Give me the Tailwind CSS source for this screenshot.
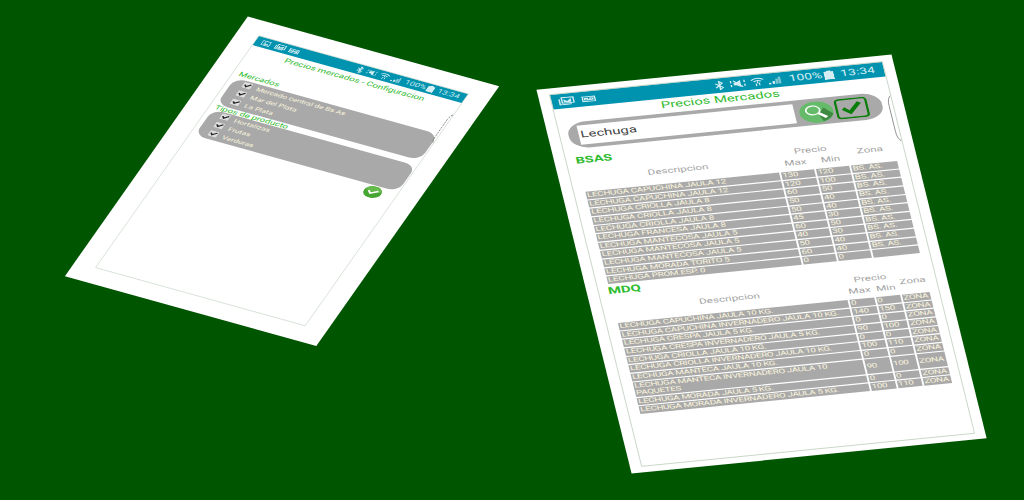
<!DOCTYPE html>
<html lang="es">
<head>
<meta charset="utf-8">
<title>Precios Mercados</title>
<script src="https://cdn.jsdelivr.net/npm/@tailwindcss/browser@4"></script>
</head>
<body class="w-[1024px] h-[500px] overflow-hidden bg-[#005500] relative font-[Roboto,'Liberation_Sans',sans-serif]">

<svg class="hidden">
  <symbol id="picture" viewBox="0 0 18 16"><path d="M1.500 1.500h15v13h-15z" fill="none" stroke="#d5eef3" stroke-width="1.700"/><path d="M4 12l3-5 3 3 2-2 3 4zM5 4h3v2H5z" fill="#d5eef3"/></symbol>
  <symbol id="gallery" viewBox="0 0 20 16"><path d="M4.500 1.500h14v10.500h-14zM1.500 4v10.500h14" fill="none" stroke="#d5eef3" stroke-width="1.800"/><path d="M6.500 10.500v-6l4 4 5-5v7z" fill="#d5eef3"/></symbol>
  <symbol id="voicemail" viewBox="0 0 18 12"><path d="M1.500 1.500h15v9h-15zM4 4.500h3.500v3H4zM10.500 4.500H14v3h-3.500zM7 7h4" fill="none" stroke="#d5eef3" stroke-width="1.700"/></symbol>
  <symbol id="bluetooth" viewBox="0 0 12 18"><path d="M1.500 5l8 8L6 16.500v-15L9.500 5l-8 8" fill="none" stroke="#d5eef3" stroke-width="1.700"/></symbol>
  <symbol id="mute" viewBox="0 0 20 18"><path d="M5 6.500h3l5-4v13l-5-4H5z" fill="#d5eef3"/><path d="M2 3v4M2 10v4M17.500 3v4M17.500 10v4M5 3l10 12" fill="none" stroke="#d5eef3" stroke-width="1.600"/></symbol>
  <symbol id="wifi" viewBox="0 0 18 18"><path d="M1.500 5.500Q9-1 16.500 5.500M4.500 8.500Q9 4.500 13.500 8.500" fill="none" stroke="#d5eef3" stroke-width="1.900"/><path d="M9 8v4M7 12v5M11 11v5" stroke="#d5eef3" stroke-width="1.500"/></symbol>
  <symbol id="signal" viewBox="0 0 18 16"><path d="M1 15v-3h3v3zM6 15V9h3v6z" fill="#d5eef3"/><path d="M10 15V5h3.500v10zM14 15V1h3v14z" fill="#7cc6d4"/></symbol>
  <symbol id="battery" viewBox="0 0 12 17"><path d="M3.500 0h5v2H12v15H0V2h3.500z" fill="#d5eef3"/></symbol>
</svg>

<!-- Configuration screen -->
<section class="absolute left-[259px] top-[36px] w-[360px] h-[640px] origin-top-left [transform:matrix(0.5806,0.1611,-0.2547,0.3617,0,0)]">
  <div class="absolute -left-[36px] -right-[37px] -top-[38px] -bottom-[40px] bg-white"></div>
  <div class="relative h-full flex flex-col outline-1 outline-[#bccdbc]">
    <header class="h-[25px] shrink-0 bg-[#0093b0] text-[#d5eef3] flex items-center pl-[10px] pr-[9px] text-[15px]">
      <svg class="w-[16px] h-[14px]"><use href="#picture"/></svg>
      <svg class="w-[19px] h-[15px] ml-[7px]"><use href="#gallery"/></svg>
      <svg class="w-[18px] h-[12px] ml-[5px]"><use href="#voicemail"/></svg>
      <svg class="w-[12px] h-[18px] ml-auto"><use href="#bluetooth"/></svg>
      <svg class="w-[20px] h-[17px] ml-[4px]"><use href="#mute"/></svg>
      <svg class="w-[18px] h-[18px] ml-[3px]"><use href="#wifi"/></svg>
      <svg class="w-[17px] h-[16px] ml-[2px]"><use href="#signal"/></svg>
      <span class="w-[36px] ml-[7px]">100%</span>
      <svg class="w-[12px] h-[17px] ml-[2px]"><use href="#battery"/></svg>
      <span class="w-[38px] ml-[6px]">13:34</span>
    </header>
    <h1 class="text-center text-[16px] leading-[20px] mt-[5px] pl-1 text-[#2fbb2f]">Precios mercados - Configuracion</h1>
    <h2 class="mt-[40px] pl-[10px] text-[15.5px] leading-[20px] h-[22px] text-[#2fbb2f]">Mercados</h2>
    <div class="ml-[8px] mr-[2px] h-[73px] rounded-[20px] bg-[#a9a9a9] pl-[18px] pt-[1px] text-[13.5px] leading-[23px] text-[#fbf5dd]" data-items="Mercado central de Bs As|Mar del Plata|La Plata"></div>
    <h2 class="pl-[9px] text-[15.5px] leading-[18px] h-[14px] relative text-[#2fbb2f] -mt-[2px] mb-[2px]">Tipos de producto</h2>
    <div class="ml-[8px] mr-[2px] h-[72px] rounded-[20px] bg-[#a9a9a9] pl-[18px] pt-[1px] text-[13.5px] leading-[23px] text-[#fbf5dd]" data-items="Hortalizas|Frutas|Verduras"></div>
    <svg class="w-[30px] h-[30px] ml-auto mr-[23px] mt-[2px]" viewBox="0 0 30 30"><circle cx="15" cy="15" r="15" fill="#47a533"/><path d="M2 12a13 12 0 0 1 26 0q-13 5-26 0" fill="#66bb4c"/><path d="M7.500 13l5 6 10.500-9" fill="none" stroke="#fff" stroke-width="3.500"/></svg>
  </div>
  <svg class="absolute right-0 top-[57px] w-[5px] h-[80px]" viewBox="0 0 5 80"><path d="M5 1Q1 5 1 18v44q0 13 4 17" fill="none" stroke="#555" stroke-width="1.200" stroke-dasharray="5 2"/></svg>
</section>

<!-- Price list screen -->
<section class="absolute left-[550px] top-[95px] w-[360px] h-[640px] origin-top-left [transform:matrix(0.9222,-0.09167,0.14375,0.5797,0,0)]">
  <div class="absolute -left-[13px] -right-[11.5px] -inset-y-[11px] bg-white"></div>
  <div class="relative h-full flex flex-col outline-1 outline-[#bccdbc]">
    <header class="h-[25px] shrink-0 bg-[#0093b0] text-[#d5eef3] flex items-center pl-[7px] pr-[9px] text-[15px]">
      <svg class="w-[18px] h-[15px]"><use href="#gallery"/></svg>
      <svg class="w-[16px] h-[12px] ml-[7px]"><use href="#voicemail"/></svg>
      <svg class="w-[12px] h-[17px] ml-auto"><use href="#bluetooth"/></svg>
      <svg class="w-[20px] h-[17px] ml-[4px]"><use href="#mute"/></svg>
      <svg class="w-[16px] h-[17px] ml-[3px]"><use href="#wifi"/></svg>
      <svg class="w-[15px] h-[16px] ml-[3px]"><use href="#signal"/></svg>
      <span class="w-[36px] ml-[8px]">100%</span>
      <svg class="w-[11px] h-[16px] ml-[2px]"><use href="#battery"/></svg>
      <span class="w-[38px] ml-[7px]">13:34</span>
    </header>
    <h1 class="text-center text-[16px] leading-[20px] mt-px pr-[2px] text-[#2fbb2f]">Precios Mercados</h1>
    <div class="mt-[4px] ml-[9px] w-[340px] h-[45px] shrink-0 rounded-[21px] bg-[#a9a9a9] flex items-center pl-[11px]">
      <div class="w-[234px] h-[33px] bg-white text-[#444] text-[16px] leading-[32px] pl-[2px]">Lechuga</div>
      <svg class="w-[37px] h-[37px] ml-[5px] mt-px" viewBox="0 0 37 37"><circle cx="18.500" cy="18.500" r="18.300" fill="#66bb6a"/><path d="M20 22l7-10 9 11q-3 9-12 12z" fill="#3f8a43"/><circle cx="15" cy="15" r="7.500" fill="#66bb6a" stroke="#fff" stroke-width="1.800"/><path d="M20.500 20.500l8 8" stroke="#fff" stroke-width="4"/></svg>
      <svg class="w-[36px] h-[35px] ml-[2px]" viewBox="0 0 36 35"><rect x="1.500" y="1.500" width="33" height="32" rx="4" fill="none" stroke="#0a7d0a" stroke-width="2.500"/><path d="M7 19l3-4 5 6L25 7l4 3-13 18z" fill="#0a7d0a"/></svg>
    </div>
    <div class="pl-[10px] mt-[10px] h-[21px] text-[15.5px] leading-[20px] font-bold text-[#2fbb2f]">BSAS</div>
    <div class="mx-[12px] mr-[10px] h-[43px] grid grid-cols-[210px_36px_36px_50px] gap-x-[2px] grid-rows-[19px_19px] text-center text-[12.5px] leading-[19px] text-[#a3a3a3]">
      <span class="row-span-2 self-center pr-[2px] mt-[3px]">Descripcion</span><span class="col-span-2">Precio</span><span class="row-span-2 self-center mt-[1px] pr-[2px]">Zona</span><span>Max</span><span>Min</span>
    </div>
    <div id="bsas" class="ml-[12px] grid grid-cols-[210px_36px_36px_50px] gap-[2px] text-[10.6px] tracking-[-0.3px] leading-[12.64px] text-[#fbf5dd]"></div>
    <div class="pl-[10px] mt-[2px] h-[20px] text-[16px] leading-[20px] font-bold text-[#2fbb2f]">MDQ</div>
    <div class="mx-[12px] mr-[10px] h-[45px] grid grid-cols-[249px_26.500px_26.500px_30px] gap-x-[2px] grid-rows-[19px_19px] pt-[2px] text-center text-[12.5px] leading-[19px] text-[#a3a3a3]">
      <span class="row-span-2 self-center mt-[2px]">Descripcion</span><span class="col-span-2 -mx-2">Precio</span><span class="row-span-2 self-center mt-[2px]">Zona</span><span>Max</span><span>Min</span>
    </div>
    <div id="mdq" class="ml-[12px] grid grid-cols-[249px_26.500px_26.500px_30px] gap-[2px] text-[10.6px] tracking-[-0.38px] leading-[12.64px] text-[#fbf5dd]"></div>
  </div>
  <svg class="absolute right-0 top-[57px] w-[5px] h-[80px]" viewBox="0 0 5 80"><path d="M5 1Q1 5 1 18v44q0 13 4 17" fill="none" stroke="#777" stroke-width="1"/></svg>
</section>

<script>
const bsas = [
  ["CAPUCHINA JAULA 12",130,120],["CAPUCHINA JAULA 12",120,100],["CRIOLLA JAULA 8",60,50],
  ["CRIOLLA JAULA 8",50,40],["CRIOLLA JAULA 8",50,40],["FRANCESA JAULA 8",45,30],
  ["MANTECOSA JAULA 5",60,50],["MANTECOSA JAULA 5",40,30],["MANTECOSA JAULA 5",50,40],
  ["MORADA TORITO 5",60,40],["PROM.ESP. 0",0,0]];
const mdq = [
  ["CAPUCHINA JAULA 10 KG.",0,0],["CAPUCHINA INVERNADERO JAULA 10 KG.",140,150],["CRESPA JAULA 5 KG.",0,0],
  ["CRESPA INVERNADERO JAULA 5 KG.",90,100],["CRIOLLA JAULA 10 KG.",0,0],["CRIOLLA INVERNADERO JAULA 10 KG.",100,110],
  ["MANTECA JAULA 10 KG.",0,0],["MANTECA INVERNADERO JAULA 10<br>PAQUETES",90,100],
  ["MORADA JAULA 5 KG.",0,0],["MORADA INVERNADERO JAULA 5 KG.",100,110]];
const cell = t => `<div class="bg-[#a9a9a9] pl-px min-h-[12.64px] whitespace-nowrap flex items-center"><span>${t}</span></div>`;
const fill = (id, rows, zone) => document.getElementById(id).innerHTML =
  rows.map((r, i) => [`LECHUGA ${r[0]}`, r[1], r[2], zone(i)].map(cell).join("")).join("");
fill("bsas", bsas, i => i < 10 ? "BS. AS." : "");
fill("mdq", mdq, () => "ZONA");
document.querySelectorAll("[data-items]").forEach(box => {
  box.innerHTML = box.dataset.items.split("|").map(t =>
    `<div class="flex items-center gap-[9px] h-[23px]"><svg class="w-[15px] h-[15px] -mt-[4px]" viewBox="0 0 14 14"><rect width="14" height="14" rx="2" fill="#ddd"/><path d="M3 6l3 4 6-7" fill="none" stroke="#222" stroke-width="2.500"/></svg><span>${t}</span></div>`).join("");
});
</script>
</body>
</html>
